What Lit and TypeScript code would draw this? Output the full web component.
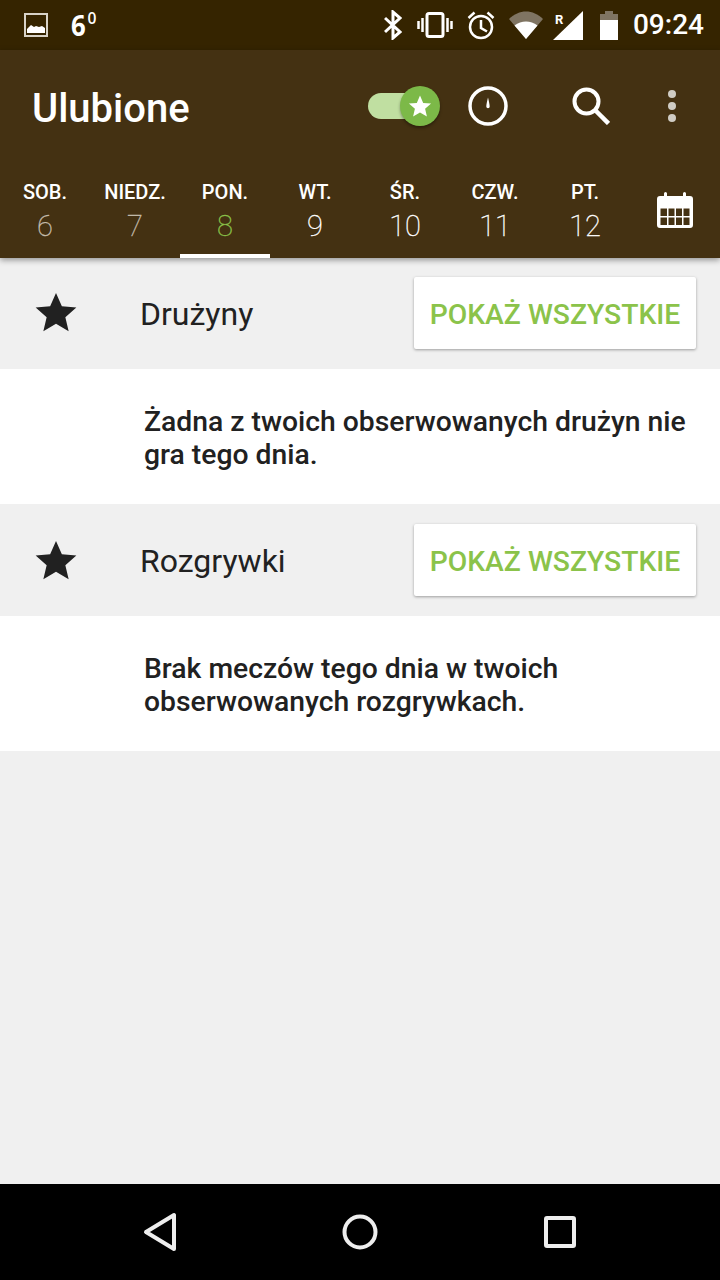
import { LitElement, html, css, svg } from "lit";
import { customElement } from "lit/decorators.js";

const days = [
  { name: "SOB.", num: "6", kind: "past" },
  { name: "NIEDZ.", num: "7", kind: "past" },
  { name: "PON.", num: "8", kind: "active" },
  { name: "WT.", num: "9", kind: "" },
  { name: "ŚR.", num: "10", kind: "" },
  { name: "CZW.", num: "11", kind: "" },
  { name: "PT.", num: "12", kind: "" },
];

const sections = [
  { title: "Drużyny", text: ["Żadna z twoich obserwowanych drużyn nie", "gra tego dnia."], size: "short" },
  { title: "Rozgrywki", text: ["Brak meczów tego dnia w twoich", "obserwowanych rozgrywkach."], size: "tall" },
];

const star = svg`<path d="M12 1.6l3.2 7.3 7.9.7-6 5.2 1.8 7.7L12 18.4l-6.9 4.1 1.8-7.7-6-5.2 7.9-.7z"/>`;

@customElement("app-root")
export class AppRoot extends LitElement {
  static styles = css`
    :host {
      display: flex;
      flex-direction: column;
      width: 720px;
      height: 1280px;
      background: #f0f0f0;
      font-family: Roboto, "Liberation Sans", sans-serif;
      overflow: hidden;
    }

    svg {
      display: block;
    }

    .status {
      height: 50px;
      flex: none;
      background: #352400;
      display: flex;
      align-items: center;
      color: #fff;
    }

    .status .pic {
      margin-left: 24px;
    }

    .temp {
      margin-left: 23px;
      margin-top: -1px;
      font-family: "Open Sans", sans-serif;
      font-weight: 700;
      font-size: 28px;
      line-height: 30px;
      display: flex;
      transform: scaleX(0.92);
      transform-origin: left;
    }

    .temp sup {
      font-size: 17px;
      line-height: 15px;
      margin-left: 2px;
      font-weight: 600;
    }

    .status-right {
      margin-left: auto;
      display: flex;
      align-items: center;
    }

    .bt { margin-right: 15px; }
    .vib { margin-right: 14px; }
    .alarm { margin-right: 14px; }
    .wifi { margin-right: 10px; }
    .signal-wrap { margin-right: 17px; position: relative; }
    .batt { margin-right: 15px; }

    .r {
      position: absolute;
      left: 2px;
      top: 2px;
      font-size: 13px;
      line-height: 13px;
      font-weight: 700;
      color: #fff;
    }

    .time {
      font-size: 28px;
      font-weight: 500;
      margin-right: 16px;
      line-height: 30px;
    }

    .appbar {
      flex: none;
      background: #443112;
      height: 208px;
      display: flex;
      flex-direction: column;
      box-shadow: 0 2px 6px rgba(0, 0, 0, 0.4);
      position: relative;
      z-index: 1;
    }

    .toolbar {
      height: 116px;
      flex: none;
      display: flex;
      align-items: center;
      color: #fff;
      padding-bottom: 5px;
      box-sizing: border-box;
    }

    .title {
      margin-left: 32px;
      margin-top: 6px;
      font-size: 40px;
      font-weight: 500;
    }

    .switch {
      margin-left: auto;
      width: 72px;
      height: 40px;
      position: relative;
      margin-right: 28px;
    }

    .track {
      position: absolute;
      left: 0;
      top: 7px;
      width: 60px;
      height: 26px;
      border-radius: 13px;
      background: #c0dfa1;
    }

    .thumb {
      position: absolute;
      right: 0;
      top: 0;
      width: 40px;
      height: 40px;
      border-radius: 50%;
      background: #7cb948;
      display: flex;
      align-items: center;
      justify-content: center;
      box-shadow: 0 2px 3px rgba(0, 0, 0, 0.35);
    }

    .search { margin-left: 64px; }
    .more { margin-left: 58px; margin-right: 44px; }

    .tabs {
      flex: 1;
      display: flex;
    }

    .tab {
      width: 90px;
      flex: none;
      display: flex;
      flex-direction: column;
      align-items: center;
      color: #fff;
      box-sizing: border-box;
    }

    .tab .name {
      font-size: 20px;
      font-weight: 500;
      line-height: 24px;
      margin-top: 14px;
    }

    .tab .num {
      font-size: 29px;
      font-weight: 100;
      line-height: 34px;
      margin-top: 5px;
      -webkit-text-stroke: 0.35px currentColor;
    }

    .tab.past .num { color: #c4bcac; }
    .tab.active .num { color: #8bc34a; }
    .tab.active { border-bottom: 4px solid #fff; }

    .cal {
      flex: 1;
      display: flex;
      justify-content: center;
      padding-top: 26px;
    }

    .sec-head {
      display: flex;
      align-items: center;
      height: 111px;
      flex: none;
      color: #212121;
      box-sizing: border-box;
      padding-bottom: 1px;
    }

    .sec-head.tall {
      height: 112px;
      padding-bottom: 0;
    }

    .sec-head .star {
      margin-left: 34px;
      margin-top: -2px;
      fill: #212121;
    }

    .sec-head.tall .star {
      margin-top: 0;
    }

    .sec-head .label {
      margin-left: 62px;
      margin-top: 2px;
      font-size: 32px;
    }

    .show-all {
      margin-left: auto;
      margin-right: 24px;
      width: 282px;
      height: 72px;
      box-sizing: border-box;
      padding-top: 2px;
      background: #fff;
      border-radius: 2px;
      box-shadow: 0 1px 3px rgba(0, 0, 0, 0.35);
      color: #8bc34a;
      font-size: 28.3px;
      font-weight: 500;
      display: flex;
      align-items: center;
      justify-content: center;
    }

    .sec-body {
      background: #fff;
      height: 135px;
      flex: none;
      padding: 36px 0 0 144px;
      box-sizing: border-box;
      font-size: 28.3px;
      font-weight: 500;
      line-height: 33px;
      color: #212121;
    }

    .spacer {
      flex: 1;
    }

    .nav {
      height: 96px;
      flex: none;
      background: #000;
      display: flex;
      align-items: center;
    }
  `;

  render() {
    return html`
      <div class="status">
        <svg class="pic" width="24" height="24" viewBox="0 0 24 24">
          <rect x="1" y="1" width="22" height="22" fill="none" stroke="#d8d3c8" stroke-width="2"/>
          <path d="M3 20v-4l4-4 3 2 2-1 3 1 3-1 3 2v5z" fill="#fff"/>
        </svg>
        <div class="temp">6<sup>0</sup></div>
        <div class="status-right">
          <svg class="bt" width="18" height="30" viewBox="0 0 18 30" fill="none" stroke="#fff" stroke-width="3">
            <path d="M1 8l15 14-7 6V2l7 6L1 22"/>
          </svg>
          <svg class="vib" width="36" height="26" viewBox="0 0 36 26" fill="none" stroke="#fff">
            <rect x="10" y="1.500" width="16" height="23" rx="2" stroke-width="3"/>
            <path d="M5.500 6v14M1.500 9v8M30.500 6v14M34.500 9v8" stroke-width="2.500"/>
          </svg>
          <svg class="alarm" width="28" height="29" viewBox="0 0 28 29" fill="none" stroke="#fff" stroke-width="2.500">
            <circle cx="14" cy="16" r="11"/>
            <path d="M14 9v8l6 3.500M1.500 7l6-5.500M26.500 7l-6-5.500"/>
          </svg>
          <svg class="wifi" width="34" height="28" viewBox="0 0 34 28">
            <path d="M17 28L0 8C5 3 11 0.500 17 0.500S29 3 34 8z" fill="#7f7462"/>
            <path d="M17 28L5.500 14.500C9 12 13 10.500 17 10.500s8 1.500 11.500 4z" fill="#fff"/>
          </svg>
          <div class="signal-wrap">
            <svg width="30" height="29" viewBox="0 0 30 29">
              <path d="M0 29L30 0v29z" fill="#fff"/>
            </svg>
            <span class="r">R</span>
          </div>
          <svg class="batt" width="18" height="29" viewBox="0 0 18 29">
            <path d="M5 0h8v3h5v6H0V3h5z" fill="#7f7462"/>
            <rect y="9" width="18" height="20" fill="#fff"/>
          </svg>
          <div class="time">09:24</div>
        </div>
      </div>

      <div class="appbar">
        <div class="toolbar">
          <div class="title">Ulubione</div>
          <div class="switch">
            <div class="track"></div>
            <div class="thumb">
              <svg width="24" height="24" viewBox="0 0 24 24" fill="#fff">${star}</svg>
            </div>
          </div>
          <svg width="40" height="40" viewBox="0 0 40 40" fill="none">
            <circle cx="20" cy="20" r="18" stroke="#fff" stroke-width="3.500"/>
            <path d="M20 11.500c.8 3 1.700 7 1.700 9a1.700 1.700 0 0 1-3.400 0c0-2 .9-6 1.700-9z" fill="#fff"/>
          </svg>
          <svg class="search" width="38" height="38" viewBox="0 0 38 38" fill="none" stroke="#fff" stroke-width="4">
            <circle cx="14.500" cy="14.500" r="12"/>
            <path d="M23 23l13.500 13.500" stroke-width="4.500"/>
          </svg>
          <svg class="more" width="8" height="32" viewBox="0 0 8 32" fill="#d0ccc4">
            <circle cx="4" cy="4" r="4"/><circle cx="4" cy="16" r="4"/><circle cx="4" cy="28" r="4"/>
          </svg>
        </div>
        <div class="tabs">
          ${days.map(
            (d) => html`
              <div class="tab ${d.kind}">
                <div class="name">${d.name}</div>
                <div class="num">${d.num}</div>
              </div>
            `
          )}
          <div class="cal">
            <svg width="36" height="36" viewBox="0 0 36 36">
              <path fill="#fff" fill-rule="evenodd" d="M3 4h4V1.500a1.500 1.500 0 0 1 3 0V4h16V1.500a1.500 1.500 0 0 1 3 0V4h4a3 3 0 0 1 3 3v26a3 3 0 0 1-3 3H3a3 3 0 0 1-3-3V7a3 3 0 0 1 3-3zM3.500 16.500V24H10v-7.500zm8 0V24h6v-7.500zm7.500 0V24h6v-7.500zm7.500 0V24h6v-7.500zM3.500 25.500V33H10v-7.500zm8 0V33h6v-7.500zm7.500 0V33h6v-7.500zm7.500 0V33h6v-7.500z"/>
            </svg>
          </div>
        </div>
      </div>

      ${sections.map(
        (s) => html`
          <div class="sec-head ${s.size}">
            <svg class="star" width="44" height="44" viewBox="0 0 24 24">${star}</svg>
            <div class="label">${s.title}</div>
            <div class="show-all">POKAŻ WSZYSTKIE</div>
          </div>
          <div class="sec-body">${s.text[0]}<br />${s.text[1]}</div>
        `
      )}
      <div class="spacer"></div>
      <div class="nav">
        <svg width="720" height="64" viewBox="0 0 720 64" fill="none" stroke="#eee" stroke-width="4" stroke-linejoin="round">
          <path d="M146 32L174 15v34z"/>
          <circle cx="360" cy="32" r="15.500"/>
          <rect x="546" y="18" width="28" height="28" rx="1"/>
        </svg>
      </div>
    `;
  }
}
